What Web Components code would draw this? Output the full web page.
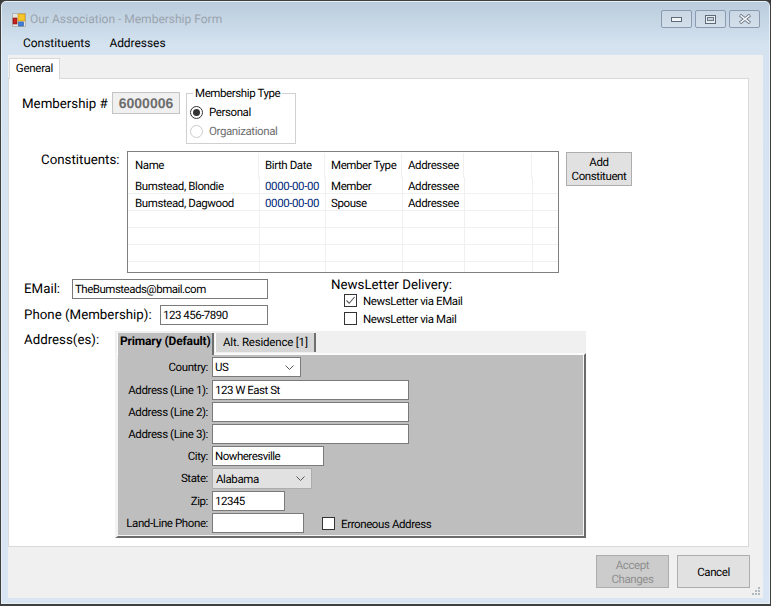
<!DOCTYPE html>
<html>
<head>
<meta charset="utf-8">
<title>Membership Form</title>
<style>
  html, body { margin: 0; background: #3a3a3a; }
  body { width: 771px; height: 606px; overflow: hidden; font: 11.5px Roboto, sans-serif; letter-spacing: -0.4px; text-rendering: geometricPrecision; }
</style>
</head>
<body>
<ms-window caption="Our Association - Membership Form">
  <membership-page></membership-page>
</ms-window>

<script>
class MsWindow extends HTMLElement {
    constructor() {
        super();
        this.attachShadow({ mode: 'open' });
    }

    connectedCallback() {
        const caption = this.getAttribute('caption') || '';
        this.shadowRoot.innerHTML = `
        <style>
            :host {
                display: flex;
                flex-direction: column;
                box-sizing: border-box;
                width: 771px;
                height: 606px;
                border: 1px solid #3f3f3f;
                border-bottom-width: 2px;
                border-radius: 6px 6px 0 0;
                box-shadow: inset 0 0 0 1px #e6eef6;
                background: linear-gradient(#b9cbdc 0, #d5e3f0 45px, #d9e5f2 100%);
            }
            .title {
                display: flex;
                align-items: flex-start;
                height: 32px;
                flex: none;
            }
            .title svg.logo { margin: 11px 0 0 10px; }
            .title span {
                margin: 10px 0 0 4px;
                font: 12px/17px Roboto, sans-serif;
                letter-spacing: 0;
                color: #9aa4ae;
            }
            .caps {
                margin: 9px 10px 0 auto;
                display: flex;
                gap: 3px;
            }
            .cap {
                box-sizing: border-box;
                width: 31px;
                height: 18px;
                border: 1px solid #8b9ab0;
                border-radius: 2px;
                background: linear-gradient(#cad7e4, #d3e0ec);
                display: flex;
                align-items: center;
                justify-content: center;
            }
            .menu {
                display: flex;
                height: 22px;
                flex: none;
                padding-left: 22px;
                gap: 19px;
                font: 12px/20px Roboto, sans-serif;
                letter-spacing: -0.05px;
                color: #000;
            }
            .client {
                flex: 1;
                margin: 0 7px 6px 7px;
                background: #f0f0f0;
                display: flex;
                flex-direction: column;
            }
        </style>
        <div class="title">
            <svg class="logo" width="15" height="15" viewBox="0 0 15 15">
                <rect x="1.5" y="1.5" width="13" height="13" fill="#e4e4e4" stroke="#b5b5b5"/>
                <rect x="2" y="6" width="4" height="6" fill="#c8201c" stroke="#7c1512" stroke-width="0.6"/>
                <rect x="7" y="2" width="7" height="7" fill="#f5c52a" stroke="#c08f10" stroke-width="0.6"/>
                <rect x="7.5" y="10" width="5" height="4" fill="#3f7fdc" stroke="#2a58a0" stroke-width="0.6"/>
            </svg>
            <span>${caption}</span>
            <div class="caps">
                <div class="cap"><svg width="11" height="5" viewBox="0 0 11 5"><rect x="0.5" y="0.5" width="10" height="4" fill="#f2f5f8" stroke="#5f6b7a"/></svg></div>
                <div class="cap"><svg width="11" height="9" viewBox="0 0 11 9"><rect x="0.5" y="0.5" width="10" height="8" fill="#e8edf2" stroke="#5f6b7a"/><rect x="2.5" y="2.5" width="6" height="3" fill="#c6d2de" stroke="#6b7786"/></svg></div>
                <div class="cap"><svg width="12" height="10" viewBox="0 0 12 10"><path d="M1 1 L11 9 M11 1 L1 9" stroke="#626d7b" stroke-width="3.2"/><path d="M1.5 1.3 L10.5 8.7 M10.5 1.3 L1.5 8.7" stroke="#f4f6f8" stroke-width="1.6"/></svg></div>
            </div>
        </div>
        <div class="menu"><span>Constituents</span><span>Addresses</span></div>
        <div class="client"><slot></slot></div>
        `;
    }
}

class MsRadio extends HTMLElement {
    constructor() {
        super();
        this.attachShadow({ mode: 'open' });
    }

    connectedCallback() {
        const disabled = this.hasAttribute('disabled');
        const checked = this.hasAttribute('checked');
        this.shadowRoot.innerHTML = `
        <style>
            :host { display: flex; align-items: center; gap: 6px; height: 14px; color: ${disabled ? '#6d6d6d' : '#000'}; }
            i {
                box-sizing: border-box;
                width: 13px;
                height: 13px;
                border: 1px solid ${disabled ? '#cccccc' : '#333333'};
                border-radius: 50%;
                background: #fff;
                display: flex;
                align-items: center;
                justify-content: center;
            }
            b { width: 7px; height: 7px; border-radius: 50%; background: #333; }
        </style>
        <i>${checked ? '<b></b>' : ''}</i><span><slot></slot></span>
        `;
    }
}

class MsCheck extends HTMLElement {
    constructor() {
        super();
        this.attachShadow({ mode: 'open' });
    }

    connectedCallback() {
        const checked = this.hasAttribute('checked');
        this.shadowRoot.innerHTML = `
        <style>
            :host { display: flex; align-items: center; gap: 6px; height: 13px; white-space: nowrap; }
            i {
                box-sizing: border-box;
                width: 13px;
                height: 13px;
                border: 1px solid #333;
                background: #fff;
                display: flex;
            }
        </style>
        <i>${checked ? '<svg width="11" height="11" viewBox="0 0 11 11"><path d="M1.5 5.5 L4.2 8.3 L9.6 2" fill="none" stroke="#555" stroke-width="1.1"/></svg>' : ''}</i><span><slot></slot></span>
        `;
    }
}

class MsInput extends HTMLElement {
    constructor() {
        super();
        this.attachShadow({ mode: 'open' });
    }

    connectedCallback() {
        this.shadowRoot.innerHTML = `
        <style>
            :host {
                display: block;
                box-sizing: border-box;
                height: 20px;
                border: 1px solid #7a7a7a;
                background: #fff;
                padding-left: 2px;
                line-height: 18px;
                letter-spacing: -0.5px;
                white-space: nowrap;
                overflow: hidden;
                color: #000;
            }
        </style>
        <slot></slot>
        `;
    }
}

class MsCombo extends HTMLElement {
    constructor() {
        super();
        this.attachShadow({ mode: 'open' });
    }

    connectedCallback() {
        const flat = this.hasAttribute('flat');
        this.shadowRoot.innerHTML = `
        <style>
            :host {
                display: flex;
                align-items: center;
                justify-content: space-between;
                box-sizing: border-box;
                height: ${flat ? 21 : 20}px;
                border: 1px solid ${flat ? '#adadad' : '#7a7a7a'};
                background: ${flat ? '#e1e1e1' : '#fff'};
                padding: 0 6px 0 ${flat ? 3 : 2}px;
                color: #000;
            }
        </style>
        <span><slot></slot></span>
        <svg width="9" height="5" viewBox="0 0 9 5"><path d="M0.5 0.5 L4.5 4.5 L8.5 0.5" fill="none" stroke="#555" stroke-width="1"/></svg>
        `;
    }
}

class MsButton extends HTMLElement {
    constructor() {
        super();
        this.attachShadow({ mode: 'open' });
    }

    connectedCallback() {
        const disabled = this.hasAttribute('disabled');
        this.shadowRoot.innerHTML = `
        <style>
            :host {
                display: flex;
                align-items: center;
                justify-content: center;
                box-sizing: border-box;
                border: 1px solid #adadad;
                background: ${disabled ? '#cccccc' : '#e1e1e1'};
                color: ${disabled ? '#8f8f8f' : '#000'};
                text-align: center;
                line-height: 14px;
            }
        </style>
        <span><slot></slot></span>
        `;
    }
}

class MsGrid extends HTMLElement {
    constructor() {
        super();
        this.attachShadow({ mode: 'open' });
    }

    connectedCallback() {
        const head = ['Name', 'Birth Date', 'Member Type', 'Addressee', '', ''];
        const rows = [
            ['Bumstead, Blondie', '0000-00-00', 'Member', 'Addressee', '', ''],
            ['Bumstead, Dagwood', '0000-00-00', 'Spouse', 'Addressee', '', ''],
            ['', '', '', '', '', ''],
            ['', '', '', '', '', ''],
            ['', '', '', '', '', ''],
            ['', '', '', '', '', '']
        ];
        const headHtml = head.map(t => `<div>${t}</div>`).join('');
        const rowsHtml = rows.map(r =>
            `<div class="row">${r.map(t => `<div>${t}</div>`).join('')}</div>`).join('');

        this.shadowRoot.innerHTML = `
        <style>
            :host {
                display: block;
                box-sizing: border-box;
                border: 1px solid #808080;
                background: #fff;
                overflow: hidden;
                color: #000;
            }
            .head {
                display: grid;
                grid-template-columns: 131px 66px 77px 62px 68px 1fr;
                height: 25px;
            }
            .head div {
                margin-top: 1px;
                padding-left: 6px;
                line-height: 25px;
                white-space: nowrap;
                border-right: 1px solid #f0f0f0;
            }
            .head div:first-child { padding-left: 7px; }
            .head div:last-child { border-right: 0; }
            .row {
                display: grid;
                grid-template-columns: 132px 66px 77px 62px 68px 1fr;
                height: 17px;
                box-sizing: border-box;
                border-bottom: 1px solid #f0f0f0;
                line-height: 18px;
            }
            .row div { padding-left: 5px; white-space: nowrap; border-right: 1px solid #f0f0f0; }
            .row div:first-child { padding-left: 7px; }
            .row div:nth-child(2) { color: #00297a; }
            .row div:last-child { border-right: 0; }
        </style>
        <div class="head">${headHtml}</div>
        ${rowsHtml}
        `;
    }
}

class AddressTabs extends HTMLElement {
    constructor() {
        super();
        this.attachShadow({ mode: 'open' });
    }

    connectedCallback() {
        this.shadowRoot.innerHTML = `
        <style>
            :host { display: block; width: 471px; height: 207px; color: #000; }
            .strip {
                display: flex;
                align-items: flex-start;
                height: 22px;
                box-sizing: border-box;
                padding: 2px 0 0 2px;
                background: #f0f0f0;
            }
            .tab {
                box-sizing: border-box;
                line-height: 17px;
                white-space: nowrap;
            }
            .on {
                position: relative;
                width: 97px;
                height: 22px;
                padding-left: 2px;
                font-size: 12px;
                font-weight: bold;
                letter-spacing: -0.15px;
                background: #bebebe;
                border-right: 2px solid #6f6f6f;
                border-left: 1px solid #fff;
            }
            .off {
                width: 101px;
                height: 19px;
                margin-left: 1px;
                padding-left: 7px;
                background: #d6d6d6;
                border-right: 2px solid #6f6f6f;
                border-left: 1px solid #fff;
                line-height: 19px;
                letter-spacing: -0.2px;
            }
            .panel {
                box-sizing: border-box;
                height: 185px;
                border-top: 2px solid #fafafa;
                border-left: 3px solid #f4f4f4;
                border-right: 2px solid #6a6a6a;
                border-bottom: 2px solid #6a6a6a;
                background: #bebebe;
                box-shadow: inset -1px -1px 0 #f4f4f4;
                padding-top: 2px;
            }
            form {
                display: grid;
                grid-template-columns: 90px 1fr;
                grid-template-rows: 23px 22px 22px 22px 22px 23px 22px 20px;
                column-gap: 4px;
            }
            label { text-align: right; line-height: 21px; white-space: nowrap; }
            .last { display: flex; gap: 18px; align-items: flex-start; }
            .last ms-check { margin-top: 4px; }
        </style>
        <div class="strip">
            <div class="tab on">Primary (Default)</div>
            <div class="tab off">Alt. Residence [1]</div>
        </div>
        <div class="panel">
            <form>
                <label>Country:</label><ms-combo style="width:89px">US</ms-combo>
                <label>Address (Line 1):</label><ms-input style="width:197px">123 W East St</ms-input>
                <label>Address (Line 2):</label><ms-input style="width:197px"></ms-input>
                <label>Address (Line 3):</label><ms-input style="width:197px"></ms-input>
                <label>City:</label><ms-input style="width:112px">Nowheresville</ms-input>
                <label>State:</label><ms-combo flat style="width:100px">Alabama</ms-combo>
                <label>Zip:</label><ms-input style="width:73px">12345</ms-input>
                <label>Land-Line Phone:</label>
                <div class="last"><ms-input style="width:92px"></ms-input><ms-check>Erroneous Address</ms-check></div>
            </form>
        </div>
        `;
    }
}

class MembershipPage extends HTMLElement {
    constructor() {
        super();
        this.attachShadow({ mode: 'open' });
    }

    connectedCallback() {
        this.shadowRoot.innerHTML = `
        <style>
            :host { display: flex; flex-direction: column; height: 100%; }
            .tabs { height: 23px; flex: none; padding: 3px 0 0 1px; box-sizing: border-box; display: flex; }
            .tabs div {
                position: relative;
                box-sizing: border-box;
                width: 51px;
                height: 21px;
                border: 1px solid #d9d9d9;
                border-bottom: 0;
                background: #fff;
                text-align: center;
                line-height: 19px;
                letter-spacing: -0.25px;
            }
            .page {
                box-sizing: border-box;
                flex: none;
                height: 469px;
                width: 741px;
                border: 1px solid #d9d9d9;
                background: #fff;
                display: flex;
                flex-direction: column;
            }
            .big { font-size: 13.3px; letter-spacing: 0; white-space: nowrap; }
            .row1 { display: flex; margin: 7px 0 0 13px; height: 58px; }
            .row1 .big { width: 90px; line-height: 38px; }
            .num {
                box-sizing: border-box;
                width: 68px;
                height: 22px;
                margin-top: 6px;
                border: 1px solid #c4c4c4;
                background: #f0f0f0;
                color: #6d6d6d;
                font: bold 14px/20px "Liberation Sans", sans-serif;
                letter-spacing: 0;
                text-align: center;
            }
            fieldset {
                box-sizing: border-box;
                width: 110px;
                height: 58px;
                margin: 0 0 0 6px;
                padding: 5px 0 0 3px;
                border: 1px solid #d0d0d0;
                min-inline-size: 0;
            }
            legend { padding: 0 2px; margin-left: 3px; line-height: 14px; white-space: nowrap; }
            fieldset ms-radio + ms-radio { margin-top: 5px; }
            .row2 { display: flex; margin: 7px 0 0 32px; }
            .row2 .big { width: 86px; line-height: 20px; }
            ms-grid { width: 432px; height: 122px; }
            .add { width: 66px; height: 34px; margin: 1px 0 0 7px; }
            .row3 { display: flex; margin: 4px 0 0 15px; height: 54px; }
            .contact { width: 307px; padding-top: 2px; }
            .line { display: flex; height: 20px; margin-bottom: 6px; }
            .line .big { line-height: 22px; }
            .news .big { line-height: 14px; padding-top: 2px; }
            .news ms-check { margin: 1px 0 0 13px; }
            .news ms-check + ms-check { margin-top: 5px; }
            .row4 { display: flex; margin: 0 0 0 15px; }
            .row4 .big { width: 91px; line-height: 20px; }
            .foot {
                flex: 1;
                display: flex;
                justify-content: flex-end;
                gap: 8px;
                padding: 8px 13px 0 0;
                position: relative;
            }
            .foot ms-button { width: 73px; height: 33px; }
            .grip { position: absolute; right: 2px; bottom: 2px; }
        </style>
        <div class="tabs"><div>General</div></div>
        <div class="page">
            <div class="row1">
                <div class="big">Membership #</div>
                <div class="num">6000006</div>
                <fieldset>
                    <legend>Membership Type</legend>
                    <ms-radio checked>Personal</ms-radio>
                    <ms-radio disabled>Organizational</ms-radio>
                </fieldset>
            </div>
            <div class="row2">
                <div class="big">Constituents:</div>
                <ms-grid></ms-grid>
                <ms-button class="add">Add<br>Constituent</ms-button>
            </div>
            <div class="row3">
                <div class="contact">
                    <div class="line"><div class="big" style="width:48px">EMail:</div><ms-input style="width:196px">TheBumsteads@bmail.com</ms-input></div>
                    <div class="line"><div class="big" style="width:136px">Phone (Membership):</div><ms-input style="width:108px">123 456-7890</ms-input></div>
                </div>
                <div class="news">
                    <div class="big">NewsLetter Delivery:</div>
                    <ms-check checked>NewsLetter via EMail</ms-check>
                    <ms-check>NewsLetter via Mail</ms-check>
                </div>
            </div>
            <div class="row4">
                <div class="big">Address(es):</div>
                <address-tabs></address-tabs>
            </div>
        </div>
        <div class="foot">
            <ms-button disabled>Accept<br>Changes</ms-button>
            <ms-button>Cancel</ms-button>
            <svg class="grip" width="9" height="9" viewBox="0 0 9 9" fill="#b0b8c0">
                <rect x="6" y="0" width="2" height="2"/><rect x="3" y="3" width="2" height="2"/><rect x="6" y="3" width="2" height="2"/>
                <rect x="0" y="6" width="2" height="2"/><rect x="3" y="6" width="2" height="2"/><rect x="6" y="6" width="2" height="2"/>
            </svg>
        </div>
        `;
    }
}

customElements.define('ms-window', MsWindow);
customElements.define('ms-radio', MsRadio);
customElements.define('ms-check', MsCheck);
customElements.define('ms-input', MsInput);
customElements.define('ms-combo', MsCombo);
customElements.define('ms-button', MsButton);
customElements.define('ms-grid', MsGrid);
customElements.define('address-tabs', AddressTabs);
customElements.define('membership-page', MembershipPage);
</script>
</body>
</html>
